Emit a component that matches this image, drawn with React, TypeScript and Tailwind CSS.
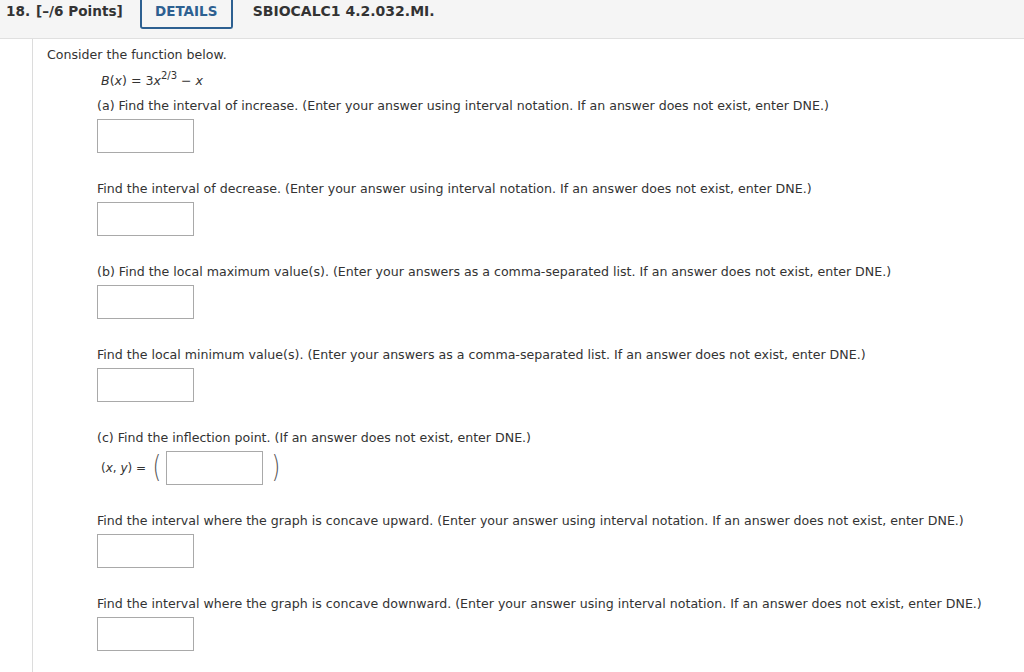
import React from 'react';

const Box = () => <div className="w-[97px] h-[34px] border border-[#a9a9a9] bg-white" />;

const Question = ({ text, children }: { text: string; children?: React.ReactNode }) => (
  <div className="pb-[27px] pt-[1px]">
    <p className="leading-[16px] h-[16px] mb-[5px]">{text}</p>
    {children ?? <Box />}
  </div>
);

const DNE = 'If an answer does not exist, enter DNE.)';

export default function App() {
  return (
    <div className="w-[1024px] h-[672px] overflow-hidden bg-white text-[#333] text-[12.6px]" style={{ fontFamily: '"DejaVu Sans", Verdana, sans-serif' }}>
      <header className="h-[39px] bg-[#f5f5f5] border-b border-[#e0e0e0] flex items-start">
        <div className="flex items-center h-[23px] pl-[6px] font-bold text-[13.6px] text-[#333]">
          <span>18.</span>
          <span className="ml-[6px]">[–/6 Points]</span>
        </div>
        <div className="ml-[17px] w-[93px] h-[29px] border-2 border-t-0 border-[#2d6091] rounded-b-[3px] flex items-center justify-center pb-[5px] text-[#2d6091] text-[13.5px] font-bold">
          DETAILS
        </div>
        <div className="ml-[20px] h-[23px] flex items-center font-bold text-[14px] text-[#333]">SBIOCALC1 4.2.032.MI.</div>
      </header>
      <div className="flex h-[633px]">
        <div className="w-[33px] border-r border-[#dcdcdc]" />
        <div className="pl-[14px] pt-[8px]">
          <p className="leading-[16px]">Consider the function below.</p>
          <p className="pl-[54px] mt-[10px] leading-[16px] mb-[8px]">
            <i>B</i>(<i>x</i>) = 3<i>x</i><sup className="text-[10px] relative -top-[6px] align-baseline">2/3</sup> − <i>x</i>
          </p>
          <div className="pl-[50px]">
            <Question text={`(a) Find the interval of increase. (Enter your answer using interval notation. ${DNE}`} />
            <Question text={`Find the interval of decrease. (Enter your answer using interval notation. ${DNE}`} />
            <Question text={`(b) Find the local maximum value(s). (Enter your answers as a comma-separated list. ${DNE}`} />
            <Question text={`Find the local minimum value(s). (Enter your answers as a comma-separated list. ${DNE}`} />
            <Question text={`(c) Find the inflection point. (${DNE}`}>
              <div className="flex items-center h-[34px] pl-[4px] mt-[1px]">
                <span className="text-[12px]">(<i>x</i>, <i>y</i>) =</span>
                <span className="text-[30px] font-extralight leading-none ml-[5px] -mt-[3px] text-[#555] scale-x-75">(</span>
                <div className="ml-[3px] w-[97px] h-[34px] border border-[#a9a9a9]" />
                <span className="text-[30px] font-extralight leading-none ml-[7px] -mt-[3px] text-[#555] scale-x-75">)</span>
              </div>
            </Question>
            <Question text={`Find the interval where the graph is concave upward. (Enter your answer using interval notation. ${DNE}`} />
            <Question text={`Find the interval where the graph is concave downward. (Enter your answer using interval notation. ${DNE}`} />
          </div>
        </div>
      </div>
    </div>
  );
}
